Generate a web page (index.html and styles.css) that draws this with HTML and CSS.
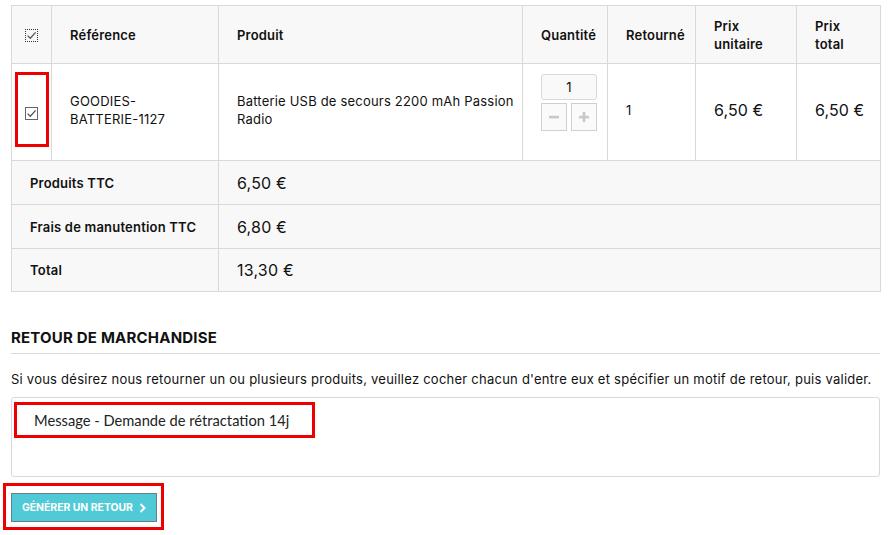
FILE: index.html
```html
<!DOCTYPE html>
<html lang="fr">
<head>
<meta charset="utf-8">
<link rel="stylesheet" href="styles.css">
</head>
<body>
<div class="page">
  <table class="order">
    <colgroup>
      <col class="c1"><col class="c2"><col class="c3"><col class="c4"><col class="c5"><col class="c6"><col class="c7">
    </colgroup>
    <thead>
      <tr class="head">
        <th class="chk"><span class="box dotted"><svg width="13" height="13" viewBox="0 0 13 13"><path d="M2.6 6.6 L5.3 9.2 L10.6 3.4" fill="none" stroke="#555" stroke-width="1.3"/></svg></span></th>
        <th>Référence</th>
        <th>Produit</th>
        <th class="qh">Quantité</th>
        <th>Retourné</th>
        <th>Prix<br>unitaire</th>
        <th>Prix<br>total</th>
      </tr>
    </thead>
    <tbody>
      <tr class="item">
        <td class="chk"><span class="box"><svg width="13" height="13" viewBox="0 0 13 13"><path d="M2.6 6.6 L5.3 9.2 L10.6 3.4" fill="none" stroke="#555" stroke-width="1.3"/></svg></span></td>
        <td>GOODIES-<br>BATTERIE-1127</td>
        <td>Batterie USB de secours 2200 mAh Passion<br>Radio</td>
        <td class="qty">
          <div class="qinput">1</div>
          <div class="qbtns">
            <span class="qbtn"><svg width="12" height="12" viewBox="0 0 12 12"><rect x="1" y="4.8" width="10" height="2.6" fill="#c9c9c9"/></svg></span>
            <span class="qbtn"><svg width="12" height="12" viewBox="0 0 12 12"><rect x="1" y="4.8" width="10" height="2.6" fill="#c9c9c9"/><rect x="4.7" y="1" width="2.6" height="10" fill="#c9c9c9"/></svg></span>
          </div>
        </td>
        <td>1</td>
        <td class="price">6,50 €</td>
        <td class="price">6,50 €</td>
      </tr>
      <tr class="sum">
        <th colspan="2">Produits TTC</th>
        <td colspan="5" class="val">6,50 €</td>
      </tr>
      <tr class="sum">
        <th colspan="2">Frais de manutention TTC</th>
        <td colspan="5" class="val">6,80 €</td>
      </tr>
      <tr class="sum last">
        <th colspan="2">Total</th>
        <td colspan="5" class="val">13,30 €</td>
      </tr>
    </tbody>
  </table>

  <section class="ret">
    <h3 class="ret-title">RETOUR DE MARCHANDISE</h3>
    <p class="ret-text">Si vous désirez nous retourner un ou plusieurs produits, veuillez cocher chacun d'entre eux et spécifier un motif de retour, puis valider.</p>
    <div class="textarea">
      <span class="msg">Message - Demande de rétractation 14j</span>
    </div>
    <div class="actions">
      <button class="btn">GÉNÉRER UN RETOUR <svg width="8" height="10" viewBox="0 0 8 10"><path d="M1.5 1 L5.5 5 L1.5 9" fill="none" stroke="#fff" stroke-width="2"/></svg></button>
    </div>
  </section>

  <div class="mark mark-check"></div>
  <div class="mark mark-msg"></div>
  <div class="mark mark-btn"></div>
</div>
</body>
</html>
```

FILE: styles.css
```css
* { box-sizing: border-box; }
html, body { margin: 0; padding: 0; background: #fff; }
body {
  font-family: "Inter", "Noto Sans", sans-serif;
  color: #111;
  font-size: 13px;
  letter-spacing: 0.2px;
}
.page {
  position: relative;
  padding: 5px 9px 0 11px;
  width: 889px;
  min-height: 535px;
}
.order {
  width: 869px;
  border-collapse: collapse;
  table-layout: fixed;
}
.c1 { width: 40px; }
.c2 { width: 167px; }
.c3 { width: 304px; }
.c4 { width: 85px; }
.c5 { width: 88px; }
.c6 { width: 101px; }
.c7 { width: 84px; }

.order th, .order td {
  border: 1px solid #d9d9d9;
  padding: 0 4px 0 18px;
  text-align: left;
  vertical-align: middle;
  line-height: 18px;
}
.order th { font-weight: 600; font-size: 13px; }
.head { height: 58px; background: #f8f8f8; }
.head th.qh { padding-right: 0; }
.order .chk { padding: 0; text-align: center; }
.box { display: inline-block; width: 13px; height: 13px; border: 1px solid #666; position: relative; vertical-align: middle; }
.box svg { position: absolute; left: -1px; top: -1px; }
.box.dotted { border-style: dotted; border-color: #333; }

.item { height: 97px; background: #fff; }
.item td { font-size: 13px; padding-bottom: 4px; }
.item td.chk { padding-bottom: 0; }
.item td.price { font-size: 16px; letter-spacing: 0.1px; }
.item td.qty { vertical-align: top; padding-top: 10px; padding-bottom: 0; }
.qinput {
  width: 56px; height: 26px;
  border: 1px solid #d9d9d9; border-radius: 3px;
  background: #f9f9f9;
  text-align: center; line-height: 24px; font-size: 13px;
}
.qbtns { display: flex; gap: 4px; margin-top: 3px; }
.qbtn {
  width: 26px; height: 28px;
  border: 1px solid #d0d0d0;
  background: #fafafa;
  display: flex; align-items: center; justify-content: center;
}

.sum { height: 44px; background: #f8f8f8; }
.sum.last { height: 43px; }
.sum th { font-size: 13px; padding-left: 18px; }
.sum td.val { font-size: 16px; padding-left: 18px; letter-spacing: 0.2px; }

.ret { margin-top: 37px; }
.ret-title {
  margin: 0;
  font-size: 15px; font-weight: 700;
  letter-spacing: 0.2px;
  padding-bottom: 6px;
  border-bottom: 1px solid #d9d9d9;
  line-height: 18px;
}
.ret-text { margin: 16px 0 0; font-size: 13px; line-height: 18px; letter-spacing: 0.24px; }
.textarea {
  margin-top: 9px;
  height: 80px;
  border: 1px solid #d9d9d9;
  border-radius: 3px;
  padding: 13px 0 0 22px;
}
.msg { font-family: "Lato", "Open Sans", sans-serif; font-size: 14.7px; color: #222; letter-spacing: 0; }
.actions { margin-top: 16px; }
.btn {
  display: inline-flex; align-items: center; gap: 6px;
  height: 29px; width: 146px;
  padding: 0 0 0 10px;
  background: #4fcad6;
  border: 1px solid #6b7f82;
  color: #fff;
  font-family: "Inter", sans-serif;
  font-weight: 700; font-size: 10.4px;
  letter-spacing: 0;
}

.mark { position: absolute; border: 3px solid #ee0000; }
.mark-check { left: 15px; top: 72px; width: 34px; height: 75px; }
.mark-msg { left: 14px; top: 402px; width: 301px; height: 36px; }
.mark-btn { left: 3px; top: 483px; width: 161px; height: 47px; }
```
